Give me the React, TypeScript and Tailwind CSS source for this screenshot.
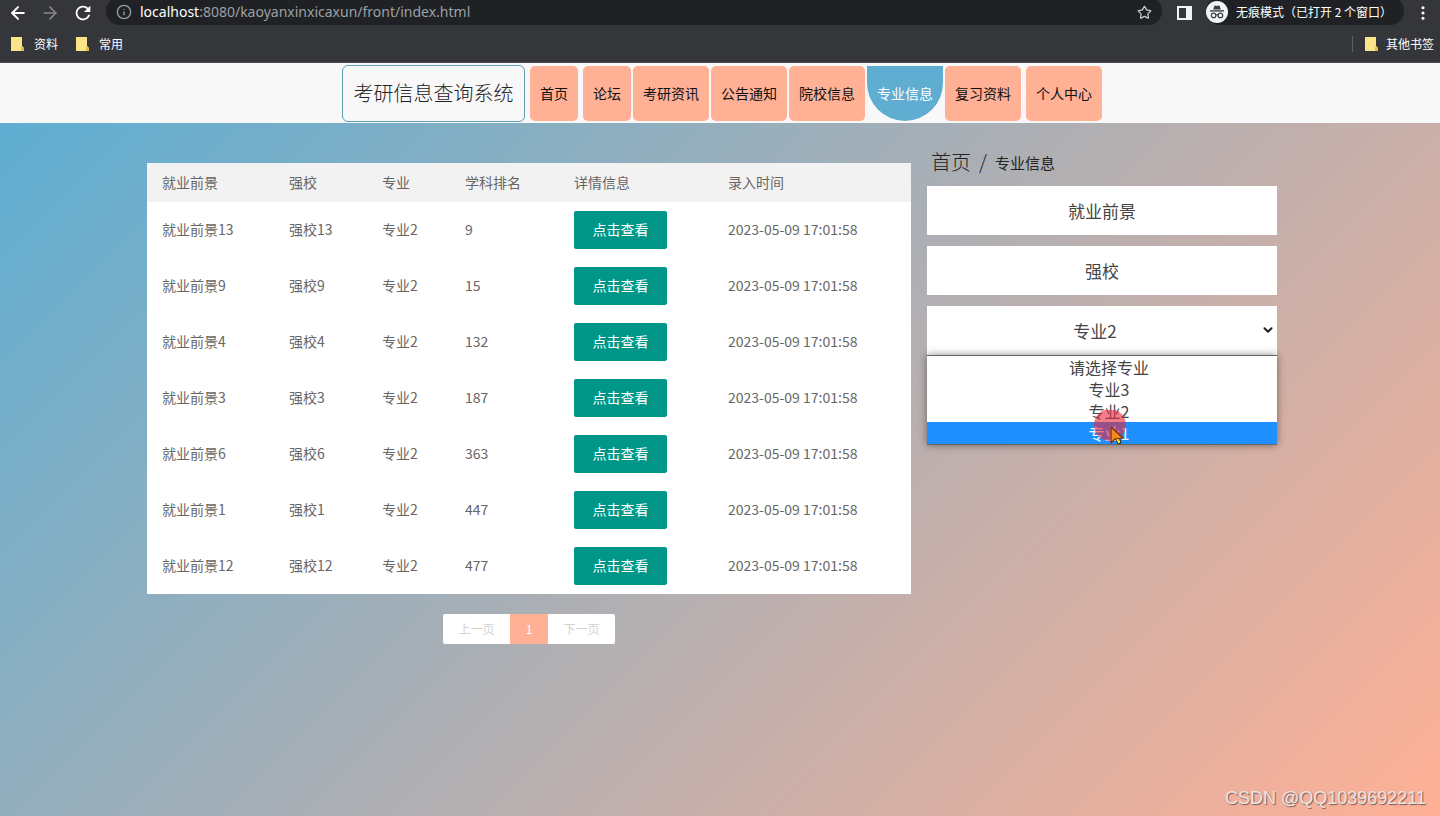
import { useState } from "react";
import { ArrowLeft, ArrowRight, ChevronDown, Info, MoreVertical, Star } from "lucide-react";
import { MdRefresh } from "react-icons/md";

const NAV = [
  { label: "首页", gap: "ml-[3px]" },
  { label: "论坛", gap: "ml-[3px]" },
  { label: "考研资讯", gap: "" },
  { label: "公告通知", gap: "" },
  { label: "院校信息", gap: "" },
  { label: "专业信息", gap: "" },
  { label: "复习资料", gap: "" },
  { label: "个人中心", gap: "ml-[3px]" },
];

const ROWS = [
  { no: "13", rank: 9 },
  { no: "9", rank: 15 },
  { no: "4", rank: 132 },
  { no: "3", rank: 187 },
  { no: "6", rank: 363 },
  { no: "1", rank: 447 },
  { no: "12", rank: 477 },
];

const MAJORS = ["请选择专业", "专业3", "专业2", "专业1"];

function NoteIcon() {
  return (
    <svg viewBox="0 0 13 14" className="h-3.5 w-[13px] shrink-0">
      <path d="M0 0h11v9l2 2v3H0z" fill="#fbe38a" />
      <path d="M10 14v-3l1-2 2 2v3z" fill="#e3bd4c" />
    </svg>
  );
}

function IncognitoIcon() {
  return (
    <svg viewBox="0 0 22 22" className="size-[22px] shrink-0">
      <circle cx="11" cy="11" r="11" fill="#f1f3f4" />
      <path d="M7.2 8.6 8.3 5q.3-.8 1.1-.5l1.6.5 1.6-.5q.8-.3 1.1.5l1.1 3.6z" fill="#3c4043" />
      <path d="M4 9.9h14" stroke="#3c4043" strokeWidth="1.4" />
      <g fill="none" stroke="#3c4043" strokeWidth="1.2">
        <circle cx="7.6" cy="14.4" r="2.3" />
        <circle cx="14.4" cy="14.4" r="2.3" />
        <path d="M9.9 14q1.1-.7 2.2 0" />
      </g>
    </svg>
  );
}

function BrowserBar() {
  return (
    <div className="flex h-[63px] flex-col overflow-hidden border-b border-[#4b4a50] bg-[#35363a] text-white">
      <div className="flex h-[26px] items-center pr-2 pl-2">
        <button aria-label="后退"><ArrowLeft size={20} strokeWidth={2.4} /></button>
        <button aria-label="前进" className="ml-3 text-[#85868a]"><ArrowRight size={20} strokeWidth={2} /></button>
        <button aria-label="重新加载" className="ml-3"><MdRefresh size={22} /></button>
        <div className="-mt-1 ml-3 flex h-7 flex-1 items-center rounded-[14px] bg-[#202124] pt-0.5 pr-2.5 pl-2.5">
          <Info size={16} className="text-[#9aa0a6]" />
          <p className="ml-2 flex-1 font-['Noto_Sans',sans-serif] text-sm text-[#9aa0a6]">
            <span className="text-white">localhost</span>:8080/kaoyanxinxicaxun/front/index.html
          </p>
          <button aria-label="收藏"><Star size={15} className="text-[#c8cacd]" /></button>
        </div>
        <svg viewBox="0 0 15 14" className="ml-[15px] h-3.5 w-[15px]">
          <path d="M0 0h15v14H0zM2 2v10h7V2z" fill="#f1f3f4" fillRule="evenodd" />
        </svg>
        <div className="-mt-1 ml-3.5 flex h-7 items-center rounded-[14px] bg-[#202124] pt-0.5 pr-3">
          <IncognitoIcon />
          <span className="ml-2 text-xs whitespace-nowrap">无痕模式（已打开 2 个窗口）</span>
        </div>
        <button aria-label="菜单" className="ml-2.5"><MoreVertical size={18} strokeWidth={2.2} /></button>
      </div>
      <div className="flex h-9 items-center pr-1.5 pl-[11px] text-xs">
        <a href="#" className="flex items-center gap-2.5"><NoteIcon />资料</a>
        <a href="#" className="ml-[18px] flex items-center gap-2.5"><NoteIcon />常用</a>
        <a href="#" className="ml-auto flex items-center gap-2 border-l border-[#5f6064] pl-3"><NoteIcon />其他书签</a>
      </div>
    </div>
  );
}

function SiteNav() {
  return (
    <header className="flex h-[60px] items-center justify-center gap-0.5 bg-[#f8f8f8] pl-1">
      <h1 className="flex h-[57px] w-[183px] items-center justify-center rounded-md border border-[#5f9fb8] text-xl font-light text-[#222]">
        考研信息查询系统
      </h1>
      {NAV.map(({ label, gap }) => (
        <a
          key={label}
          href="#"
          className={`flex h-[55px] items-center px-2.5 text-sm ${gap} ${
            label === "专业信息" ? "rounded-b-full bg-[#5fadd1] text-white" : "rounded-[5px] bg-[#ffb095] text-[#111]"
          }`}
        >
          {label}
        </a>
      ))}
    </header>
  );
}

function MajorTable() {
  return (
    <table className="w-full table-fixed bg-white text-left text-sm text-[#666]">
      <colgroup>
        <col className="w-[127px]" />
        <col className="w-[93px]" />
        <col className="w-[83px]" />
        <col className="w-[109px]" />
        <col className="w-[154px]" />
        <col />
      </colgroup>
      <thead>
        <tr className="h-[39px] bg-[#f2f2f2]">
          {["就业前景", "强校", "专业", "学科排名", "详情信息", "录入时间"].map((h) => (
            <th key={h} className="px-[15px] pb-0.5 font-normal">{h}</th>
          ))}
        </tr>
      </thead>
      <tbody>
        {ROWS.map((row) => (
          <tr key={row.no} className="h-14">
            <td className="px-[15px] pb-0.5">就业前景{row.no}</td>
            <td className="px-[15px] pb-0.5">强校{row.no}</td>
            <td className="px-[15px] pb-0.5">专业2</td>
            <td className="px-[15px] pb-0.5">{row.rank}</td>
            <td className="px-[15px]">
              <button className="block h-[38px] w-[93px] rounded-xs bg-[#009688] pb-0.5 text-white">点击查看</button>
            </td>
            <td className="px-[15px] pb-0.5 whitespace-nowrap">2023-05-09 17:01:58</td>
          </tr>
        ))}
      </tbody>
    </table>
  );
}

function Pagination() {
  return (
    <nav className="mt-5 flex h-[30px] justify-center text-xs text-[#d2d2d2]">
      <button className="w-[67px] rounded-l-xs bg-white">上一页</button>
      <button className="w-[38px] bg-[#ffb095] text-white">1</button>
      <button className="w-[67px] rounded-r-xs bg-white">下一页</button>
    </nav>
  );
}

// click highlight with the arrow over it
function Pointer() {
  return (
    <svg viewBox="0 0 34 38" className="pointer-events-none absolute -bottom-1 left-1/2 h-[38px] w-[34px] -translate-x-[9px]">
      <circle cx="17" cy="15" r="16" fill="#e8283c" fillOpacity="0.6" />
      <path d="m22 28 3 6 3-1-2-6z" fill="#e8e337" stroke="#222" strokeWidth="1" />
      <path d="M18 17v16l4-4 8-1z" fill="#f08a1c" stroke="#7a2a12" strokeWidth="1.2" strokeLinejoin="round" />
    </svg>
  );
}

function SearchPanel() {
  const [major, setMajor] = useState("专业2");
  const field = "block h-[49px] w-full bg-white text-center text-[17px] text-[#444] outline-none placeholder:text-[#444] placeholder:opacity-100";

  return (
    <aside className="flex-1 px-4 pt-6">
      <p className="mb-[9px] flex h-[30px] items-center pl-1 text-xl font-light text-[#222]">
        <a href="#">首页</a>
        <span className="mx-2">/</span>
        <span className="text-[15px] font-normal">专业信息</span>
      </p>
      <form className="space-y-[11px]">
        <input type="text" aria-label="就业前景" placeholder="就业前景" className={field} />
        <input type="text" aria-label="强校" placeholder="强校" className={field} />
        <div className="relative">
          <select
            aria-label="专业"
            value={major}
            onChange={(e) => setMajor(e.target.value)}
            className={`${field} appearance-none pr-3.5 [text-align-last:center]`}
          >
            {MAJORS.map((m) => <option key={m}>{m}</option>)}
          </select>
          <ChevronDown size={14} strokeWidth={3.4} className="pointer-events-none absolute top-[17px] right-0.5 text-[#222]" />
          <div className="absolute top-full left-0 w-full border-y border-[#666] bg-white shadow-[0_0_8px_rgba(0,0,0,0.45)]">
            <ul role="listbox" aria-label="专业" className="text-center text-base leading-[22px] text-[#444]">
              {MAJORS.map((m) => (
                <li
                  key={m}
                  role="option"
                  aria-selected={m === major}
                  className={m === "专业1" ? "bg-[#1e90ff] pl-3.5 text-white" : "pl-3.5"}
                >
                  {m}
                </li>
              ))}
            </ul>
            <Pointer />
          </div>
        </div>
      </form>
    </aside>
  );
}

export default function App() {
  return (
    <div className="flex min-h-screen flex-col font-['Noto_Sans_CJK_SC',sans-serif]">
      <BrowserBar />
      <SiteNav />
      <main className="relative flex-1 bg-[linear-gradient(135deg,#5eaed2,#ffb095)]">
        <div className="mx-auto flex max-w-[1146px]">
          <section className="w-2/3 pt-10">
            <MajorTable />
            <Pagination />
          </section>
          <SearchPanel />
        </div>
        <p className="absolute right-3.5 bottom-1.5 font-['Liberation_Sans',sans-serif] text-lg leading-6 text-[#ece4e2] [text-shadow:1px_1px_1px_rgba(90,70,70,0.8)]">
          CSDN @QQ1039692211
        </p>
      </main>
    </div>
  );
}
